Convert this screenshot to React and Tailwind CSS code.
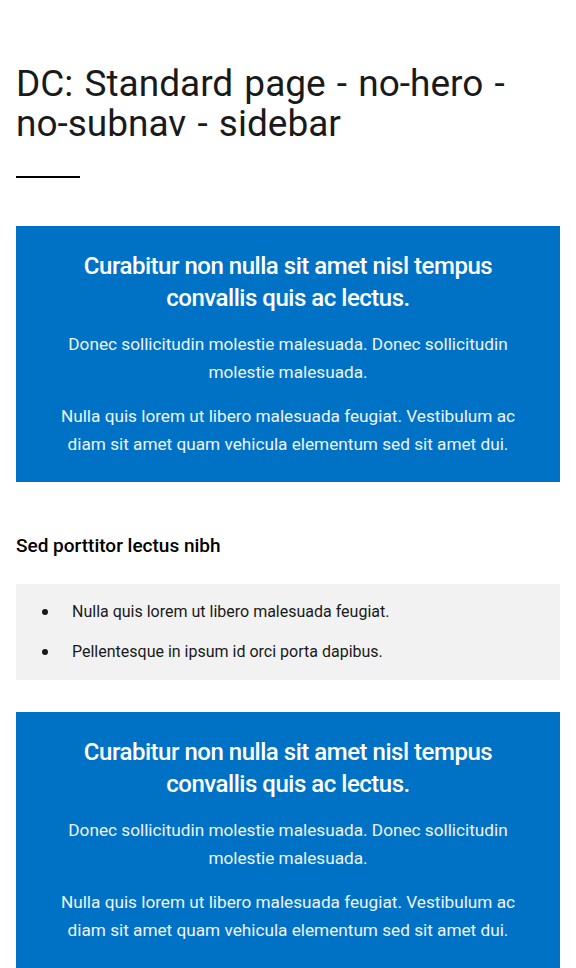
const PROMO = {
  title: 'Curabitur non nulla sit amet nisl tempus convallis quis ac lectus.',
  body: [
    'Donec sollicitudin molestie malesuada. Donec sollicitudin molestie malesuada.',
    'Nulla quis lorem ut libero malesuada feugiat. Vestibulum ac diam sit amet quam vehicula elementum sed sit amet dui.',
  ],
}

const LIST = [
  'Nulla quis lorem ut libero malesuada feugiat.',
  'Pellentesque in ipsum id orci porta dapibus.',
]

function Promo() {
  return (
    <section className="bg-[#0072c6] text-white text-center px-10 pt-6 pb-6">
      <h2 className="text-[24px] leading-8 font-medium tracking-[-0.02em] px-6">{PROMO.title}</h2>
      <div className="mt-4 space-y-4">
        {PROMO.body.map((p) => (
          <p key={p} className="text-[17.2px] leading-7 text-[#eef4fb]">{p}</p>
        ))}
      </div>
    </section>
  )
}

export default function App() {
  return (
    <div className="bg-white min-h-screen px-4 pt-[64px] pb-10 text-[#1a1a1a] font-['Roboto','Liberation_Sans',sans-serif]">
      <h1 className="text-[37px] leading-10 tracking-normal [word-spacing:2px]">
        DC: Standard page - no-hero - <span className="whitespace-nowrap">no-subnav</span> - sidebar
      </h1>
      <div className="mt-[32px] w-16 h-[2px] bg-black" />

      <div className="mt-12">
        <Promo />
      </div>

      <h3 className="mt-[52px] text-[19px] leading-6 font-medium tracking-normal text-black">
        Sed porttitor lectus nibh
      </h3>

      <ul className="mt-[26px] bg-[#f2f2f2] pl-[26px] pr-6 py-2 text-[16px] leading-10 text-[#1a1a1a]">
        {LIST.map((item) => (
          <li key={item} className="flex items-center">
            <span className="w-[6px] h-[6px] rounded-full bg-[#1a1a1a] shrink-0" />
            <span className="ml-[24px]">{item}</span>
          </li>
        ))}
      </ul>

      <div className="mt-8">
        <Promo />
      </div>
    </div>
  )
}
